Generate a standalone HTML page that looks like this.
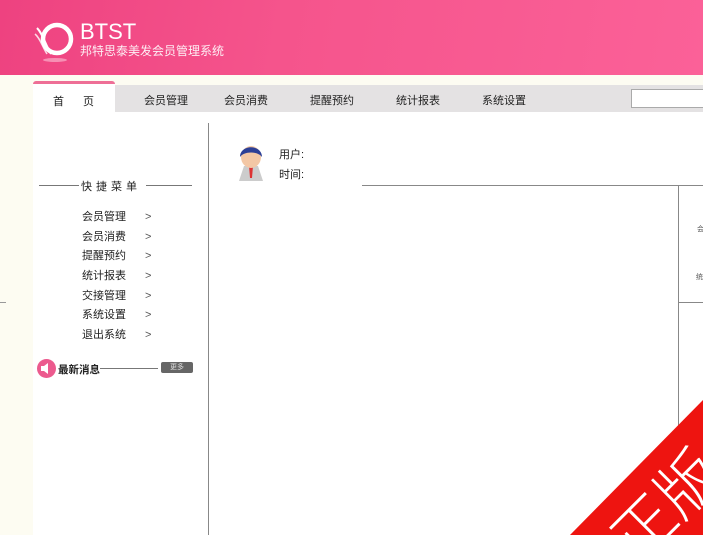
<!DOCTYPE html>
<html style="width:703px;height:535px;overflow:hidden"><head><meta charset="utf-8"><style>
*{margin:0;padding:0;box-sizing:border-box}
body{width:703px;height:535px;overflow:hidden;background:#fdfcf2;font-family:"Liberation Sans","Noto Sans CJK SC",sans-serif;font-size:11px;color:#222;position:relative}
.hdr{position:absolute;left:0;top:0;width:703px;height:75px;background:linear-gradient(100deg,#ee4280 0%,#f5548c 40%,#fb6198 100%)}
.abs{position:absolute;white-space:nowrap}
.nav{position:absolute;left:115px;top:85px;width:588px;height:27px;background:#e4e2e3}
.nav span{position:absolute;top:7px;font-size:11px;color:#222}
.tab{position:absolute;left:33px;top:81px;width:82px;height:31px;background:#fff;border-top:3px solid #ee6f96;border-radius:3px 3px 0 0}
.main{position:absolute;left:33px;top:112px;width:670px;height:423px;background:#fff}
.menu div{position:absolute;left:82px;font-size:11px;color:#222;white-space:nowrap}
.menu div b{font-weight:normal;position:absolute;left:63px;top:3px;color:#555}
</style></head><body>
<div class="hdr"></div>
<svg class="abs" style="left:33px;top:20px" width="42" height="42" viewBox="0 0 42 42"><circle cx="24" cy="19" r="14" fill="none" stroke="#fff" stroke-width="4.5"/><path d="M4 8 C10 14,12 24,18 34" stroke="#fff" stroke-width="2" fill="none"/><path d="M2 14 C7 18,9 26,14 34" stroke="#fff" stroke-width="1.5" fill="none" opacity=".8"/><ellipse cx="22" cy="40" rx="12" ry="2" fill="#fff" opacity=".4"/></svg>
<div class="abs" style="left:80px;top:20px;color:#fff;font-size:22px;line-height:24px">BTST</div>
<div class="abs" style="left:80px;top:42px;color:#fff;font-size:12px;opacity:.9">邦特思泰美发会员管理系统</div>
<div class="main"></div>
<div class="nav">
<span style="left:29px">会员管理</span><span style="left:109px">会员消费</span><span style="left:195px">提醒预约</span><span style="left:281px">统计报表</span><span style="left:367px">系统设置</span>
<div class="abs" style="left:516px;top:4px;width:72px;height:19px;background:#fff;border:1px solid #aaa;border-right:none"></div>
</div>
<div class="tab"><span class="abs" style="left:20px;top:9px">首</span><span class="abs" style="left:50px;top:9px">页</span></div>
<div class="abs" style="left:0;top:302px;width:6px;height:1px;background:#999"></div>
<div class="abs" style="left:208px;top:123px;width:1px;height:412px;background:#888"></div>
<div class="abs" style="left:39px;top:185px;width:40px;height:1px;background:#777"></div>
<div class="abs" style="left:81px;top:178px;font-size:11px;letter-spacing:4px">快捷菜单</div>
<div class="abs" style="left:146px;top:185px;width:46px;height:1px;background:#777"></div>
<div class="menu">
<div style="top:208px">会员管理<b>&gt;</b></div>
<div style="top:228px">会员消费<b>&gt;</b></div>
<div style="top:247px">提醒预约<b>&gt;</b></div>
<div style="top:267px">统计报表<b>&gt;</b></div>
<div style="top:287px">交接管理<b>&gt;</b></div>
<div style="top:306px">系统设置<b>&gt;</b></div>
<div style="top:326px">退出系统<b>&gt;</b></div>
</div>
<div class="abs" style="left:37px;top:359px;width:19px;height:19px;border-radius:50%;background:#ec5a8e"></div>
<svg class="abs" style="left:40px;top:362px" width="14" height="13" viewBox="0 0 14 13"><path d="M1 4 H4 L8 1 V12 L4 9 H1Z" fill="#fff"/></svg>
<div class="abs" style="left:58px;top:362px;font-size:10.5px;font-weight:bold">最新消息</div>
<div class="abs" style="left:100px;top:368px;width:58px;height:1px;background:#777"></div>
<div class="abs" style="left:161px;top:362px;width:32px;height:11px;background:#666;border-radius:2px;color:#ddd;font-size:7px;text-align:center;line-height:11px">更多</div>
<svg class="abs" style="left:236px;top:142px" width="30" height="40" viewBox="0 0 30 40"><path d="M3 39 L8 24 L22 24 L27 39Z" fill="#ccc"/><path d="M13 24 L17 24 L16 36 L14 36Z" fill="#d33"/><ellipse cx="15" cy="15" rx="10" ry="11" fill="#f3c7a5"/><path d="M4 15 C4 2,26 2,26 15 C22 9,8 9,4 15Z" fill="#2c3f96"/></svg>
<div class="abs" style="left:279px;top:146px;font-size:11px">用户:</div>
<div class="abs" style="left:279px;top:166px;font-size:11px">时间:</div>
<div class="abs" style="left:362px;top:185px;width:341px;height:1px;background:#888"></div>
<div class="abs" style="left:678px;top:185px;width:1px;height:350px;background:#888"></div>
<div class="abs" style="left:678px;top:302px;width:25px;height:1px;background:#888"></div>
<div class="abs" style="left:697px;top:224px;font-size:7px;color:#555">会</div>
<div class="abs" style="left:696px;top:272px;font-size:7px;color:#555">统</div>
<svg class="abs" style="left:560px;top:400px;overflow:hidden" width="143" height="135" viewBox="0 0 143 135"><polygon points="143,0 143,135 10,135" fill="#ee1410"/><text x="78" y="165" fill="#fff" font-size="62" font-weight="300" font-family="Noto Sans CJK SC,sans-serif" transform="rotate(-45 78 165)">正版</text></svg>
</body></html>
